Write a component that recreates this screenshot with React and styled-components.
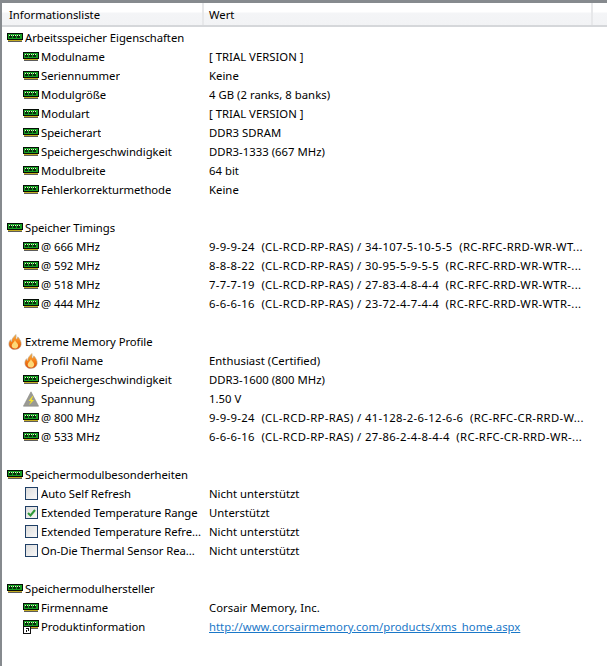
import React from 'react';
import styled, { createGlobalStyle } from 'styled-components';

const GlobalStyle = createGlobalStyle`
  html, body {
    margin: 0;
    padding: 0;
    background: #ffffff;
  }
`;

const FONT = '"Noto Sans", "DejaVu Sans", sans-serif';

const MemoryIcon = () => (
  <svg width="16" height="9" viewBox="0 0 16 9" shapeRendering="crispEdges">
    <rect x="0" y="0" width="16" height="7" fill="#060d06" />
    <rect x="1" y="1" width="14" height="5" fill="#17a024" />
    {[2, 6, 10].map((x) => (
      <g key={x}>
        <rect x={x} y="2" width="3" height="3" fill="#08300c" />
        <rect x={x} y="2" width="1" height="1" fill="#e8f4c8" />
        <rect x={x + 2} y="2" width="1" height="1" fill="#e8f4c8" />
      </g>
    ))}
    <rect x="1" y="7" width="14" height="1" fill="#c4ab22" />
    <rect x="1" y="8" width="14" height="1" fill="#5c5c5c" />
  </svg>
);

const LinkMemoryIcon = () => (
  <IconStack>
    <MemoryIcon />
    <svg width="8" height="8" viewBox="0 0 8 8" shapeRendering="crispEdges">
      <rect x="0" y="0" width="8" height="8" fill="#111111" />
      <rect x="1" y="1" width="6" height="6" fill="#ffffff" />
      <rect x="3" y="2" width="3" height="1" fill="#111111" />
      <rect x="5" y="2" width="1" height="3" fill="#111111" />
      <rect x="3" y="4" width="1" height="2" fill="#111111" />
    </svg>
  </IconStack>
);

const FlameIcon = () => (
  <svg width="14" height="16" viewBox="0 0 16 17" preserveAspectRatio="none">
    <defs>
      <linearGradient id="flame" x1="0" y1="0" x2="0" y2="1">
        <stop offset="0" stopColor="#fbb040" />
        <stop offset="0.55" stopColor="#f47a14" />
        <stop offset="1" stopColor="#d9480c" />
      </linearGradient>
    </defs>
    <path
      d="M9 0.5C10 3 8.5 4 9.5 5.5C10.5 5 11 4 11.2 3C13.5 5.5 15.5 8 15 11.5C14.5 14.5 11.5 16.5 8 16.5C4 16.5 1 14 1 10.5C1 8.5 2 7 3 6C3 7 3.5 8 4.2 8.3C4 5 6.5 3 9 0.5Z"
      fill="url(#flame)"
      stroke="#b5a690"
      strokeWidth="0.6"
    />
    <path d="M8 6.5C8.5 9 12 10 11.6 12.8C11.3 14.6 9.6 15.5 7.8 15.5C5.8 15.5 4 14 4.2 12.2C4.4 10 7.4 9 8 6.5Z" fill="#fdd878" />
  </svg>
);

const VoltageIcon = () => (
  <svg width="16" height="16" viewBox="0 0 16 16">
    <path d="M8 0.8L15.6 15.2H0.4Z" fill="#9a9a94" stroke="#8a8a84" strokeWidth="0.6" />
    <path d="M9.5 5L5.5 10H8L6 14L11 9H8.5L10.2 5Z" fill="#f4e32c" />
  </svg>
);

const Page = styled.div`
  width: 607px;
  height: 666px;
  box-sizing: border-box;
  overflow: hidden;
  background: #ffffff;
  border-top: 3px solid #868a8e;
  border-left: 2px solid #868a8e;
  font-family: ${FONT};
  font-size: 11.3px;
  color: #000000;
`;

const Header = styled.div`
  display: grid;
  grid-template-columns: 202px 389px 1fr;
  height: 24px;
  box-sizing: border-box;
  border-bottom: 2px solid #d5d7da;
  background: linear-gradient(#ffffff 0, #ffffff 9px, #f4f5f7 10px, #f2f3f5 100%);
`;

const HeaderCell = styled.div`
  display: flex;
  align-items: center;
  padding-left: ${(p) => p.$pad}px;
  padding-top: 1px;
  border-right: ${(p) => (p.$last ? 'none' : '2px solid #e7e8ea')};
  box-sizing: border-box;
`;

const Body = styled.div`
  display: flex;
  flex-direction: column;
  padding-top: 1px;
`;

const RowWrap = styled.div`
  display: grid;
  grid-template-columns: 207px 381px;
  height: 19px;
  align-items: center;
  white-space: pre;
`;

const NameCell = styled.div`
  display: flex;
  align-items: center;
  min-width: 0;
  padding-left: ${(p) => (p.$group ? 5 : 21)}px;
`;

const IconSlot = styled.span`
  flex: none;
  width: 16px;
  height: 17px;
  margin-right: 2px;
  display: flex;
  align-items: center;
  justify-content: center;
`;

const IconStack = styled.span`
  position: relative;
  display: block;
  width: 16px;
  height: 14px;

  svg:first-child {
    position: absolute;
    top: 0;
    left: 0;
  }

  svg:last-child {
    position: absolute;
    bottom: 0;
    left: 0;
  }
`;

const Label = styled.span`
  overflow: hidden;
  letter-spacing: -0.05px;
`;

const ValueCell = styled.div`
  min-width: 0;
  overflow: hidden;
  letter-spacing: ${(p) => (p.$timing ? '0.33px' : '0.03px')};
`;

const ValueLink = styled.a`
  color: #1a78c8;
  text-decoration: underline;
`;

const CheckBox = styled.span`
  display: flex;
  align-items: center;
  justify-content: center;
  box-sizing: border-box;
  width: 13px;
  height: 13px;
  border: 1px solid #1f3f66;
  background: linear-gradient(135deg, #dcdcdc, #f8f8f8);
`;

const Check = () => (
  <svg width="9" height="8" viewBox="0 0 9 8">
    <path d="M1 4L3.5 6.5L8 1" fill="none" stroke="#2f9a3a" strokeWidth="2" />
  </svg>
);

const Row = ({ icon, group, name, value, link, timing }) => (
  <RowWrap>
    <NameCell $group={group}>
      <IconSlot>{icon}</IconSlot>
      <Label>{name}</Label>
    </NameCell>
    <ValueCell $timing={timing}>{link ? <ValueLink href="#">{value}</ValueLink> : value}</ValueCell>
  </RowWrap>
);

const mem = <MemoryIcon />;
const box = <CheckBox />;

const rows = [
  { icon: mem, group: true, name: 'Arbeitsspeicher Eigenschaften' },
  { icon: mem, name: 'Modulname', value: '[ TRIAL VERSION ]' },
  { icon: mem, name: 'Seriennummer', value: 'Keine' },
  { icon: mem, name: 'Modulgröße', value: '4 GB (2 ranks, 8 banks)' },
  { icon: mem, name: 'Modulart', value: '[ TRIAL VERSION ]' },
  { icon: mem, name: 'Speicherart', value: 'DDR3 SDRAM' },
  { icon: mem, name: 'Speichergeschwindigkeit', value: 'DDR3-1333 (667 MHz)' },
  { icon: mem, name: 'Modulbreite', value: '64 bit' },
  { icon: mem, name: 'Fehlerkorrekturmethode', value: 'Keine' },
  null,
  { icon: mem, group: true, name: 'Speicher Timings' },
  { icon: mem, timing: true, name: '@ 666 MHz', value: '9-9-9-24  (CL-RCD-RP-RAS) / 34-107-5-10-5-5  (RC-RFC-RRD-WR-WT...' },
  { icon: mem, timing: true, name: '@ 592 MHz', value: '8-8-8-22  (CL-RCD-RP-RAS) / 30-95-5-9-5-5  (RC-RFC-RRD-WR-WTR-...' },
  { icon: mem, timing: true, name: '@ 518 MHz', value: '7-7-7-19  (CL-RCD-RP-RAS) / 27-83-4-8-4-4  (RC-RFC-RRD-WR-WTR-...' },
  { icon: mem, timing: true, name: '@ 444 MHz', value: '6-6-6-16  (CL-RCD-RP-RAS) / 23-72-4-7-4-4  (RC-RFC-RRD-WR-WTR-...' },
  null,
  { icon: <FlameIcon />, group: true, name: 'Extreme Memory Profile' },
  { icon: <FlameIcon />, name: 'Profil Name', value: 'Enthusiast (Certified)' },
  { icon: mem, name: 'Speichergeschwindigkeit', value: 'DDR3-1600 (800 MHz)' },
  { icon: <VoltageIcon />, name: 'Spannung', value: '1.50 V' },
  { icon: mem, timing: true, name: '@ 800 MHz', value: '9-9-9-24  (CL-RCD-RP-RAS) / 41-128-2-6-12-6-6  (RC-RFC-CR-RRD-W...' },
  { icon: mem, timing: true, name: '@ 533 MHz', value: '6-6-6-16  (CL-RCD-RP-RAS) / 27-86-2-4-8-4-4  (RC-RFC-CR-RRD-WR-...' },
  null,
  { icon: mem, group: true, name: 'Speichermodulbesonderheiten' },
  { icon: box, name: 'Auto Self Refresh', value: 'Nicht unterstützt' },
  { icon: <CheckBox><Check /></CheckBox>, name: 'Extended Temperature Range', value: 'Unterstützt' },
  { icon: box, name: 'Extended Temperature Refre...', value: 'Nicht unterstützt' },
  { icon: box, name: 'On-Die Thermal Sensor Rea...', value: 'Nicht unterstützt' },
  null,
  { icon: mem, group: true, name: 'Speichermodulhersteller' },
  { icon: mem, name: 'Firmenname', value: 'Corsair Memory, Inc.' },
  { icon: <LinkMemoryIcon />, name: 'Produktinformation', value: 'http://www.corsairmemory.com/products/xms_home.aspx', link: true },
];

export default function App() {
  return (
    <Page>
      <GlobalStyle />
      <Header>
        <HeaderCell $pad={7}>Informationsliste</HeaderCell>
        <HeaderCell $pad={5}>Wert</HeaderCell>
        <HeaderCell $last />
      </Header>
      <Body>
        {rows.map((row, index) => (row ? <Row key={index} {...row} /> : <RowWrap key={index} />))}
      </Body>
    </Page>
  );
}
